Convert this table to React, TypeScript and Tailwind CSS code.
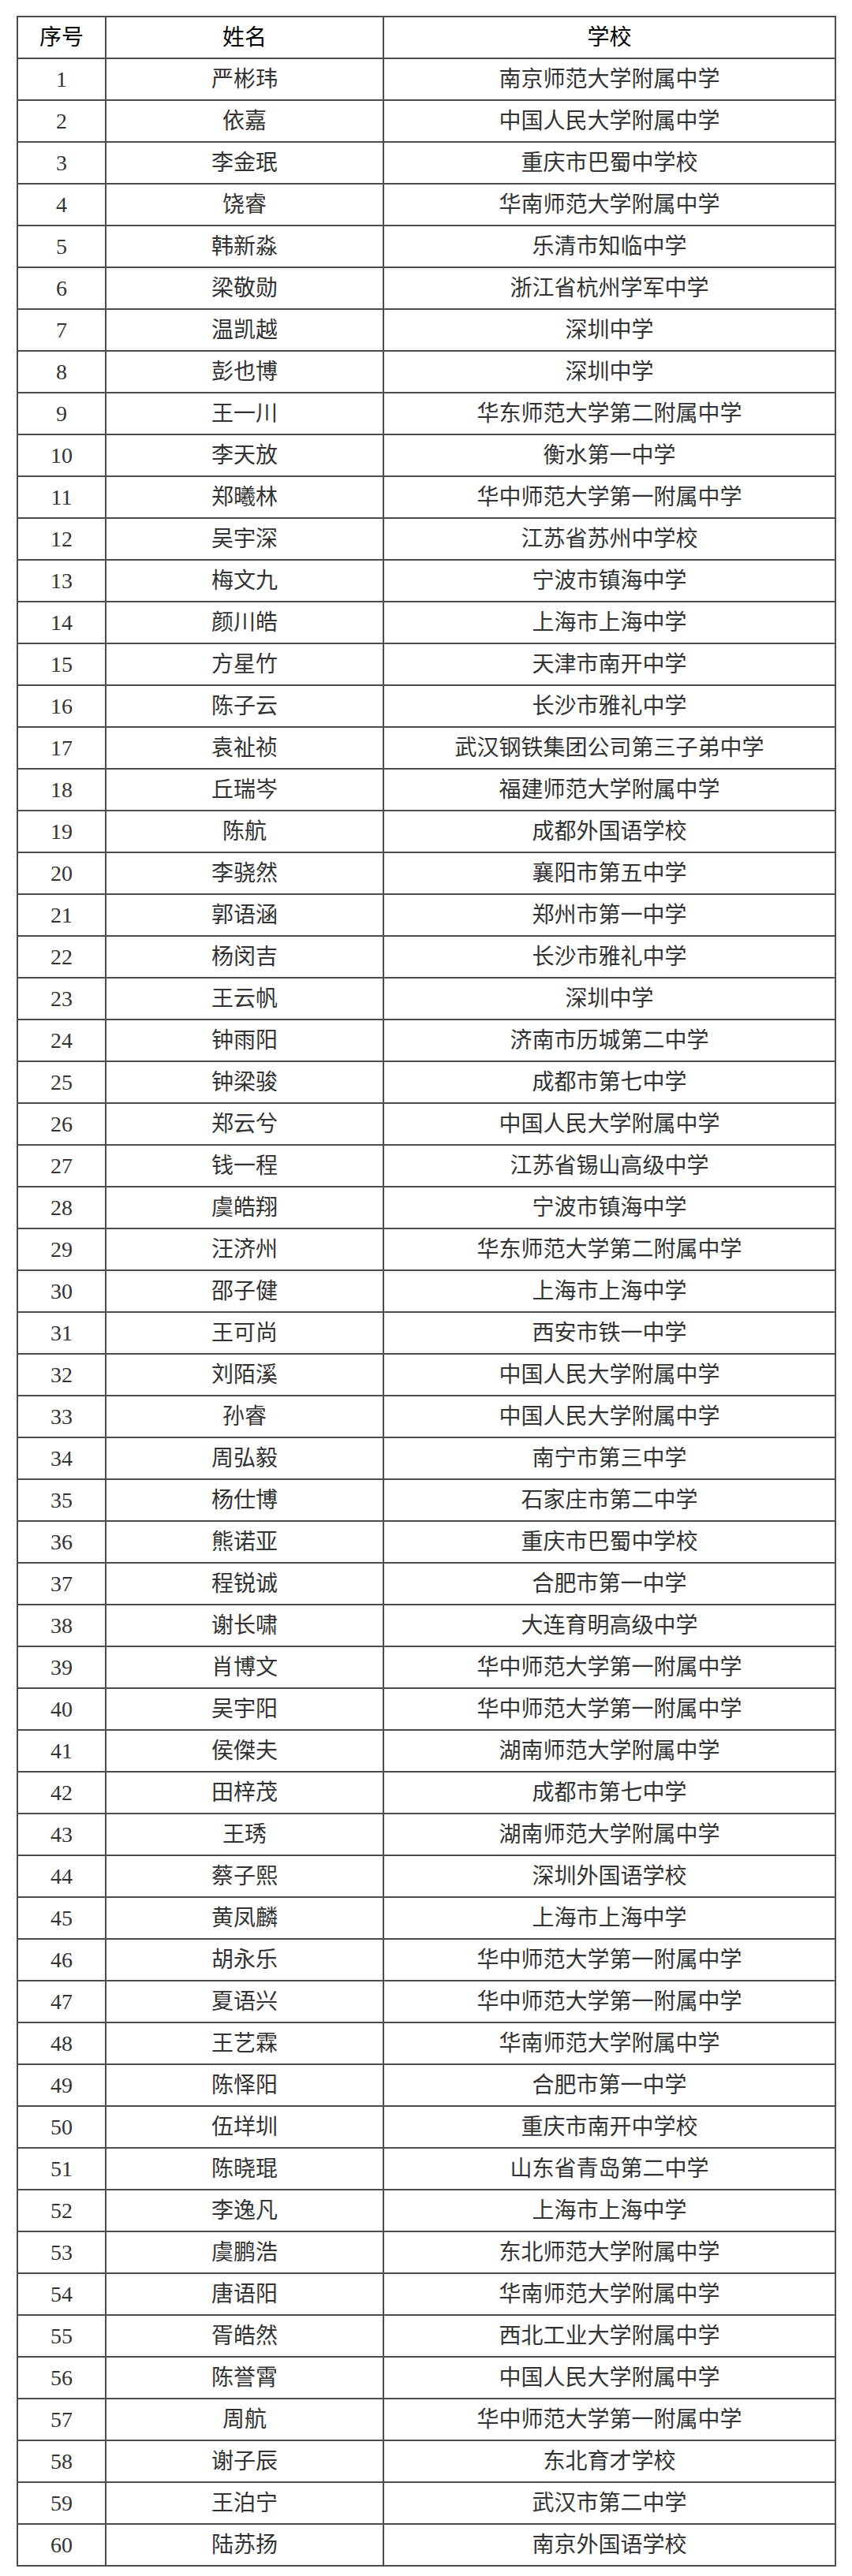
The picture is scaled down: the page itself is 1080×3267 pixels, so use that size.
const rows: [string, string][] = [
  ["严彬玮", "南京师范大学附属中学"],
  ["依嘉", "中国人民大学附属中学"],
  ["李金珉", "重庆市巴蜀中学校"],
  ["饶睿", "华南师范大学附属中学"],
  ["韩新淼", "乐清市知临中学"],
  ["梁敬勋", "浙江省杭州学军中学"],
  ["温凯越", "深圳中学"],
  ["彭也博", "深圳中学"],
  ["王一川", "华东师范大学第二附属中学"],
  ["李天放", "衡水第一中学"],
  ["郑曦林", "华中师范大学第一附属中学"],
  ["吴宇深", "江苏省苏州中学校"],
  ["梅文九", "宁波市镇海中学"],
  ["颜川皓", "上海市上海中学"],
  ["方星竹", "天津市南开中学"],
  ["陈子云", "长沙市雅礼中学"],
  ["袁祉祯", "武汉钢铁集团公司第三子弟中学"],
  ["丘瑞岑", "福建师范大学附属中学"],
  ["陈航", "成都外国语学校"],
  ["李骁然", "襄阳市第五中学"],
  ["郭语涵", "郑州市第一中学"],
  ["杨闵吉", "长沙市雅礼中学"],
  ["王云帆", "深圳中学"],
  ["钟雨阳", "济南市历城第二中学"],
  ["钟梁骏", "成都市第七中学"],
  ["郑云兮", "中国人民大学附属中学"],
  ["钱一程", "江苏省锡山高级中学"],
  ["虞皓翔", "宁波市镇海中学"],
  ["汪济州", "华东师范大学第二附属中学"],
  ["邵子健", "上海市上海中学"],
  ["王可尚", "西安市铁一中学"],
  ["刘陌溪", "中国人民大学附属中学"],
  ["孙睿", "中国人民大学附属中学"],
  ["周弘毅", "南宁市第三中学"],
  ["杨仕博", "石家庄市第二中学"],
  ["熊诺亚", "重庆市巴蜀中学校"],
  ["程锐诚", "合肥市第一中学"],
  ["谢长啸", "大连育明高级中学"],
  ["肖博文", "华中师范大学第一附属中学"],
  ["吴宇阳", "华中师范大学第一附属中学"],
  ["侯傑夫", "湖南师范大学附属中学"],
  ["田梓茂", "成都市第七中学"],
  ["王琇", "湖南师范大学附属中学"],
  ["蔡子熙", "深圳外国语学校"],
  ["黄凤麟", "上海市上海中学"],
  ["胡永乐", "华中师范大学第一附属中学"],
  ["夏语兴", "华中师范大学第一附属中学"],
  ["王艺霖", "华南师范大学附属中学"],
  ["陈怿阳", "合肥市第一中学"],
  ["伍垟圳", "重庆市南开中学校"],
  ["陈晓琨", "山东省青岛第二中学"],
  ["李逸凡", "上海市上海中学"],
  ["虞鹏浩", "东北师范大学附属中学"],
  ["唐语阳", "华南师范大学附属中学"],
  ["胥皓然", "西北工业大学附属中学"],
  ["陈誉霄", "中国人民大学附属中学"],
  ["周航", "华中师范大学第一附属中学"],
  ["谢子辰", "东北育才学校"],
  ["王泊宁", "武汉市第二中学"],
  ["陆苏扬", "南京外国语学校"],
];

const cell = "border-2 border-[#4d4d4d] p-0 text-center align-middle";

export default function App() {
  return (
    <div className="min-h-[3267px] w-[1080px] bg-white pl-[21px] pt-[20px] font-['Liberation_Serif','Noto_Sans_CJK_SC',serif] text-[28px] leading-none">
      <table className="w-[1039px] table-fixed border-collapse">
        <colgroup>
          <col className="w-[112px]" />
          <col className="w-[352px]" />
          <col />
        </colgroup>
        <thead>
          <tr className="h-[53px] text-black">
            <th className={`${cell} font-normal`}>序号</th>
            <th className={`${cell} font-normal`}>姓名</th>
            <th className={`${cell} font-normal`}>学校</th>
          </tr>
        </thead>
        <tbody className="text-[#333]">
          {rows.map(([name, school], i) => (
            <tr key={i} className="h-[53px]">
              <td className={cell}>{i + 1}</td>
              <td className={cell}>{name}</td>
              <td className={cell}>{school}</td>
            </tr>
          ))}
        </tbody>
      </table>
    </div>
  );
}
